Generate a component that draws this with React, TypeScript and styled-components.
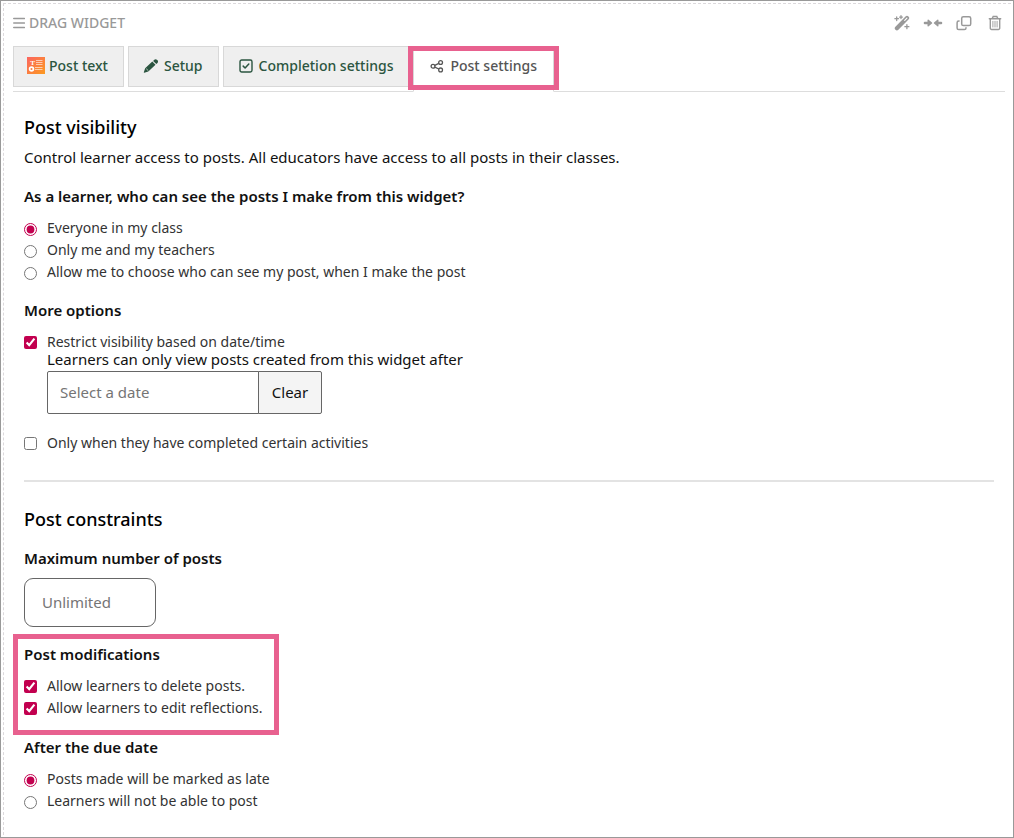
import React from "react";
import styled, { createGlobalStyle, css } from "styled-components";

const GlobalStyle = createGlobalStyle`
  *, *::before, *::after { box-sizing: border-box; }
  body {
    margin: 0;
    background: #fff;
    color: #111;
    font: 15px/22px "Noto Sans", "Open Sans", sans-serif;
  }
  button, input { font: inherit; margin: 0; }
`;

const Frame = styled.div`
  display: flex;
  min-height: 100vh;
  padding: 2px;
  border: 1px solid #999;
`;

const Widget = styled.main`
  flex: 1;
  min-width: 0;
  padding: 8px 6px 4px 9px;
  border: 1px dashed #dcd9dc;
  border-right-width: 0;
  border-bottom-width: 0;
`;

const Header = styled.header`
  display: flex;
  align-items: center;
  justify-content: space-between;
  height: 22px;
  color: #999;
`;

const DragHandle = styled.div`
  display: flex;
  align-items: center;
  gap: 4px;
  font-size: 14px;
  font-weight: 500;
  line-height: 24px;
  text-transform: uppercase;
`;

const Actions = styled.div`
  display: flex;
  gap: 11px;
`;

const IconButton = styled.button`
  display: flex;
  align-items: center;
  justify-content: center;
  width: 20px;
  height: 20px;
  padding: 0;
  border: 0;
  background: none;
  color: #999;
`;

const Tabs = styled.nav`
  display: flex;
  align-items: flex-start;
  gap: 4px;
  margin-top: 12px;
  border-bottom: 1px solid #ddd;
`;

const Outline = styled.span`
  position: absolute;
  inset: -1px -6px 1px;
  border: 5px solid #e8618f;
  pointer-events: none;
`;

const Tab = styled.button<{ $active?: boolean }>`
  position: relative;
  display: flex;
  align-items: center;
  gap: 4px;
  height: 41px;
  margin-bottom: 4px;
  padding: 0 15px 2px 13px;
  border: 1px solid #d8d8d8;
  background: #efefef;
  color: #2b5540;
  font-size: 14px;
  font-weight: 500;
  white-space: nowrap;
  ${(p) =>
    p.$active &&
    css`
      height: 46px;
      margin-bottom: -1px;
      padding-right: 16px;
      padding-left: 14px;
      padding-bottom: 7px;
      border-bottom-color: #fff;
      background: #fff;
      color: #555;
    `}
`;

const IconSlot = styled.span`
  display: flex;
  justify-content: center;
  width: 18px;
`;

const Panel = styled.div`
  padding: 23px 11px 0;
`;

const Title = styled.h2`
  margin: 0;
  color: #000;
  font-size: 18px;
  font-weight: 500;
  line-height: 24px;
`;

const Intro = styled.p`
  margin: 7px 0 17px;
`;

const Group = styled.fieldset`
  width: fit-content;
  margin: 0 0 17px;
  padding: 0;
  border: 0;
`;

const NumberField = styled.div`
  margin: 16px 0;
`;

const Outlined = styled.div`
  position: relative;
  width: fit-content;
  margin-bottom: 18px;

  ${Outline} {
    inset: -9px -16px -17px -11px;
  }
`;

const headingStyle = css`
  display: block;
  padding: 0;
  font-weight: 600;
  line-height: 22px;
`;

const Legend = styled.legend`
  ${headingStyle}
`;

const FieldLabel = styled.label`
  ${headingStyle}
`;

const Options = styled.div`
  display: flex;
  flex-direction: column;
  gap: 2px;
  margin-top: 11px;
`;

const Option = styled.label`
  display: flex;
  align-items: center;
  gap: 10px;
  color: #333;
  font-size: 14px;
  line-height: 20px;

  input {
    width: 13px;
    height: 13px;
    accent-color: #c2004f;
  }
  input[type="radio"] {
    margin-top: 2px;
  }
`;

const Nested = styled.div`
  margin: -4px 0 17px 23px;
`;

const NestedLabel = styled.label`
  display: block;
  padding-bottom: 3px;
  line-height: 18px;
`;

const DateRow = styled.div`
  display: flex;
`;

const TextInput = styled.input`
  border: 1px solid #666;
  background: #fff;
  color: #111;
  &::placeholder { color: #757575; opacity: 1; }
`;

const DateInput = styled(TextInput)`
  width: 212px;
  height: 43px;
  padding: 0 12px 2px;
  border-radius: 2px 0 0 2px;
`;

const LimitInput = styled(TextInput)`
  display: block;
  width: 132px;
  height: 49px;
  margin-top: 9px;
  padding: 0 17px 2px;
  border-radius: 9px;
`;

const ClearButton = styled.button`
  width: 64px;
  margin-left: -1px;
  padding: 0 0 2px;
  border: 1px solid #666;
  border-radius: 0 2px 2px 0;
  background: #f4f4f4;
  color: #111;
`;

const Divider = styled.hr`
  height: 2px;
  margin: 27px 0 25px;
  border: 0;
  background: #e3e3e3;
`;

const MenuIcon = () => (
  <svg width="12" height="12" viewBox="0 0 12 12" stroke="currentColor" strokeWidth="1.6" strokeLinecap="round">
    <path d="M.8 1.5h10.6M.8 6h10.6M.8 10.5h10.6" />
  </svg>
);

const WandIcon = () => (
  <svg width="16" height="16" viewBox="0 0 16 16" fill="none" stroke="currentColor" strokeLinecap="round">
    <path d="M2.9 13.2 13 3" strokeWidth="4.2" />
    <path d="M10.7 5.3l2.2-2.2" stroke="#fff" strokeWidth="1.2" />
    <path d="M2.7 1.9v3.6M.9 3.7h3.6M12.9 9.7v4M10.9 11.7h4M7 .7v2.8M5.6 2.1h2.800" strokeWidth="1.3" />
  </svg>
);

const CollapseIcon = () => (
  <svg width="20" height="10" viewBox="0 0 20 10" fill="currentColor" stroke="currentColor" strokeLinejoin="round">
    <path d="M1.9 5h4M14.1 5h4" strokeWidth="2.4" strokeLinecap="round" />
    <path d="M5.2 2.2 8.5 5 5.2 7.8zM14.8 2.2 11.5 5l3.3 2.8z" strokeWidth="1.4" />
  </svg>
);

const CloneIcon = () => (
  <svg width="16" height="16" viewBox="0 0 16 16" fill="none" stroke="currentColor" strokeWidth="1.5">
    <rect x="5.7" y="1.7" width="9" height="8.8" rx="1.6" />
    <path d="M3.6 6.1h-.9A1.6 1.6 0 0 0 1.1 7.7v5.2a1.6 1.6 0 0 0 1.6 1.6h5.7A1.6 1.6 0 0 0 10 12.9v-.6" />
  </svg>
);

const TrashIcon = () => (
  <svg width="14" height="16" viewBox="0 0 14 16" fill="none" stroke="currentColor" strokeLinecap="round">
    <path d="M1.3 3.7h11.4M4.3 3.4l.9-1.9h3.6l.9 1.9M2.3 4v9.2a1.3 1.3 0 0 0 1.3 1.3h6.8a1.3 1.3 0 0 0 1.3-1.3V4" strokeWidth="1.4" />
    <path d="M4.9 6.3v5.7M7 6.3v5.7M9.1 6.3v5.7" strokeWidth=".9" />
  </svg>
);

const PostTextIcon = () => (
  <svg width="18" height="17" viewBox="0 1 18 17">
    <defs>
      <linearGradient id="postTextFill" x1="0" y1="0" x2="1" y2="1">
        <stop offset="0" stopColor="#fb6560" />
        <stop offset="1" stopColor="#fc9a20" />
      </linearGradient>
    </defs>
    <rect width="18" height="17" y="1" fill="url(#postTextFill)" />
    <text x="3.3" y="8.8" fill="#fff" fontSize="7" fontWeight="700" fontFamily="Liberation Serif, serif">T</text>
    <path d="M9 4.5h6.5M9 6.5h6.5M9 8.5h6.5M8 11.5h7.5M8 13.5h7.5" stroke="#fff" strokeOpacity=".75" strokeWidth=".8" />
    <circle cx="4.5" cy="13" r="1.9" fill="none" stroke="#fff" strokeWidth="1.7" />
  </svg>
);

const PencilIcon = () => (
  <svg width="16" height="16" viewBox="0 0 16 16" fill="currentColor">
    <path d="M9.3 3.6 12.5 6.8 5.6 13.2c-.3.3-.6.4-1 .5L1.2 14.7c-.3.1-.5-.1-.4-.4L1.9 11c.1-.4.3-.7.5-1zM10.1 2.9l1.2-1.2c.7-.7 1.9-.7 2.6 0l.6.6c.7.7.7 1.9 0 2.6l-1.2 1.2z" />
    <path d="M3.2 10.7l2.1 2" stroke="#efefef" strokeWidth=".7" />
  </svg>
);

const CheckSquareIcon = () => (
  <svg width="14" height="14" viewBox="0 0 14 14" fill="none" stroke="currentColor" strokeLinecap="round" strokeLinejoin="round">
    <rect x="1" y="1" width="12" height="12" rx="1.7" strokeWidth="1.4" />
    <path d="M4.2 7.1l1.9 1.9 3.7-4" strokeWidth="1.5" />
  </svg>
);

const ShareIcon = () => (
  <svg width="14" height="14" viewBox="0 0 14 14" fill="none" stroke="currentColor" strokeWidth="1.3">
    <circle cx="3" cy="7.2" r="1.9" />
    <circle cx="10.6" cy="3.5" r="1.9" />
    <circle cx="10.6" cy="10.9" r="1.9" />
    <path d="M4.8 6.3l4-1.9M4.8 8.1l4 1.9" />
  </svg>
);

export default function App() {
  return (
    <>
      <GlobalStyle />
      <Frame>
        <Widget>
          <Header>
            <DragHandle>
              <MenuIcon />
              Drag widget
            </DragHandle>
            <Actions>
              <IconButton aria-label="Convert"><WandIcon /></IconButton>
              <IconButton aria-label="Collapse"><CollapseIcon /></IconButton>
              <IconButton aria-label="Duplicate"><CloneIcon /></IconButton>
              <IconButton aria-label="Delete"><TrashIcon /></IconButton>
            </Actions>
          </Header>

          <Tabs>
            <Tab><IconSlot><PostTextIcon /></IconSlot>Post text</Tab>
            <Tab><IconSlot><PencilIcon /></IconSlot>Setup</Tab>
            <Tab><IconSlot><CheckSquareIcon /></IconSlot>Completion settings</Tab>
            <Tab $active>
              <IconSlot><ShareIcon /></IconSlot>Post settings
              <Outline />
            </Tab>
          </Tabs>

          <Panel>
            <Title>Post visibility</Title>
            <Intro>Control learner access to posts. All educators have access to all posts in their classes.</Intro>

            <Group>
              <Legend>As a learner, who can see the posts I make from this widget?</Legend>
              <Options>
                <Option><input type="radio" name="visibility" defaultChecked />Everyone in my class</Option>
                <Option><input type="radio" name="visibility" />Only me and my teachers</Option>
                <Option><input type="radio" name="visibility" />Allow me to choose who can see my post, when I make the post</Option>
              </Options>
            </Group>

            <Group>
              <Legend>More options</Legend>
              <Options>
                <Option><input type="checkbox" defaultChecked />Restrict visibility based on date/time</Option>
                <Nested>
                  <NestedLabel htmlFor="after-date">Learners can only view posts created from this widget after</NestedLabel>
                  <DateRow>
                    <DateInput id="after-date" type="text" placeholder="Select a date" />
                    <ClearButton type="button">Clear</ClearButton>
                  </DateRow>
                </Nested>
                <Option><input type="checkbox" />Only when they have completed certain activities</Option>
              </Options>
            </Group>

            <Divider />

            <Title>Post constraints</Title>
            <NumberField>
              <FieldLabel htmlFor="max-posts">Maximum number of posts</FieldLabel>
              <LimitInput id="max-posts" type="text" placeholder="Unlimited" />
            </NumberField>

            <Outlined>
              <Group>
                <Legend>Post modifications</Legend>
                <Options>
                  <Option><input type="checkbox" defaultChecked />Allow learners to delete posts.</Option>
                  <Option><input type="checkbox" defaultChecked />Allow learners to edit reflections.</Option>
                </Options>
              </Group>
              <Outline />
            </Outlined>

            <Group>
              <Legend>After the due date</Legend>
              <Options>
                <Option><input type="radio" name="due" defaultChecked />Posts made will be marked as late</Option>
                <Option><input type="radio" name="due" />Learners will not be able to post</Option>
              </Options>
            </Group>
          </Panel>
        </Widget>
      </Frame>
    </>
  );
}
